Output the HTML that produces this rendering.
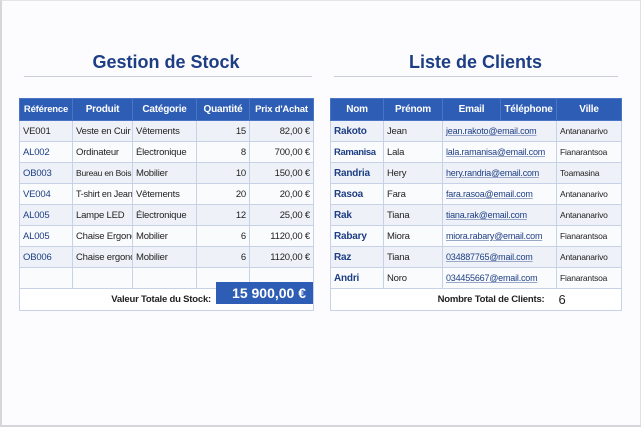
<!DOCTYPE html>
<html><head><meta charset="utf-8"><style>
*{margin:0;padding:0;box-sizing:border-box}
body{width:641px;height:427px;background:#fcfcfe;font-family:"Liberation Sans",sans-serif;position:relative;overflow:hidden}
.fr{position:absolute;left:0;top:0;width:641px;height:427px;border:2px solid #d6d6d8;border-top:1px solid #e4e4e6;border-right:1px solid #e0e0e2}
.t{position:absolute;font-weight:bold;color:#1d3e84;font-size:18px;text-align:center}
.ln{position:absolute;height:1px;background:#c9cdd6;top:76px}
table{position:absolute;border-collapse:collapse;table-layout:fixed;font-size:9.5px;color:#222;letter-spacing:-0.2px;border:1px solid #8ea3cc}
td,th{border:1px solid #c8d2e6;height:21px;padding:0 3px;white-space:nowrap;overflow:hidden}
th{background:#2e5db5;color:#fff;font-weight:bold;font-size:10px;height:22px;border-color:#4a74c4;text-align:center}
tr:nth-child(even) td{background:#eef1f7}
tr:nth-child(odd) td{background:#fafbfd}
.r{text-align:right}
.b{color:#1d3e84}
.bb{color:#1d3e84;font-weight:bold;font-size:10px}
.u{color:#1d3e84;text-decoration:underline;text-decoration-color:#9aa8c8;font-size:9px}
.v{font-size:8.5px}
.tot td{background:#fff!important;font-weight:bold;height:22px}
</style></head><body>
<div class="fr"></div>
<div class="t" style="left:19px;width:294px;top:52px">Gestion de Stock</div>
<div class="ln" style="left:24px;width:288px"></div>
<div class="t" style="left:330px;width:291px;top:52px">Liste de Clients</div>
<div class="ln" style="left:334px;width:284px"></div>

<table style="left:19px;top:98px;width:294px">
<col style="width:53px"><col style="width:60px"><col style="width:64px"><col style="width:53px"><col style="width:64px">
<tr><th style="font-size:9.5px">Référence</th><th>Produit</th><th>Catégorie</th><th>Quantité</th><th style="font-size:9.5px">Prix d'Achat</th></tr>
<tr><td>VE001</td><td>Veste en Cuir</td><td>Vêtements</td><td class="r">15</td><td class="r">82,00 €</td></tr>
<tr><td class="b">AL002</td><td>Ordinateur</td><td>Électronique</td><td class="r">8</td><td class="r">700,00 €</td></tr>
<tr><td class="b">OB003</td><td style="font-size:8.5px">Bureau en Bois</td><td>Mobilier</td><td class="r">10</td><td class="r">150,00 €</td></tr>
<tr><td class="b">VE004</td><td style="font-size:9px">T-shirt en Jean</td><td>Vêtements</td><td class="r">20</td><td class="r">20,00 €</td></tr>
<tr><td class="b">AL005</td><td>Lampe LED</td><td>Électronique</td><td class="r">12</td><td class="r">25,00 €</td></tr>
<tr><td class="b">AL005</td><td>Chaise Ergonomique</td><td>Mobilier</td><td class="r">6</td><td class="r">1120,00 €</td></tr>
<tr><td class="b">OB006</td><td>Chaise ergonomique</td><td>Mobilier</td><td class="r">6</td><td class="r">1120,00 €</td></tr>
<tr><td style="height:15px"></td><td></td><td></td><td></td><td></td></tr>
<tr class="tot"><td colspan="5" style="padding-right:102px;text-align:right">Valeur Totale du Stock:</td></tr>
</table>
<div style="position:absolute;left:216px;top:282px;width:97px;height:22px;background:#2e5db5;color:#fff;font-weight:bold;font-size:14px;text-align:right;padding-right:7px;line-height:22px">15 900,00 €</div>

<table style="left:330px;top:98px;width:291px">
<col style="width:53px"><col style="width:59px"><col style="width:58px"><col style="width:56px"><col style="width:65px">
<tr><th>Nom</th><th>Prénom</th><th>Email</th><th style="padding:0 1px">Téléphone</th><th>Ville</th></tr>
<tr><td class="bb">Rakoto</td><td>Jean</td><td colspan="2" class="u">jean.rakoto@email.com</td><td class="v">Antananarivo</td></tr>
<tr><td class="bb" style="font-size:9.5px;letter-spacing:-0.4px">Ramanisa</td><td>Lala</td><td colspan="2" class="u">lala.ramanisa@email.com</td><td class="v">Fianarantsoa</td></tr>
<tr><td class="bb">Randria</td><td>Hery</td><td colspan="2" class="u">hery.randria@email.com</td><td class="v">Toamasina</td></tr>
<tr><td class="bb">Rasoa</td><td>Fara</td><td colspan="2" class="u">fara.rasoa@email.com</td><td class="v">Antananarivo</td></tr>
<tr><td class="bb">Rak</td><td>Tiana</td><td colspan="2" class="u">tiana.rak@email.com</td><td class="v">Antananarivo</td></tr>
<tr><td class="bb">Rabary</td><td>Miora</td><td colspan="2" class="u">miora.rabary@email.com</td><td class="v">Fianarantsoa</td></tr>
<tr><td class="bb">Raz</td><td>Tiana</td><td colspan="2" class="u">034887765@mail.com</td><td class="v">Antananarivo</td></tr>
<tr><td class="bb">Andri</td><td>Noro</td><td colspan="2" class="u">034455667@email.com</td><td class="v">Fianarantsoa</td></tr>
<tr class="tot"><td colspan="4" class="r" style="border-right:none;padding-right:12px">Nombre Total de Clients:</td><td style="font-size:13px;font-weight:normal;padding-left:2px;border-left:none">6</td></tr>
</table>
</body></html>
